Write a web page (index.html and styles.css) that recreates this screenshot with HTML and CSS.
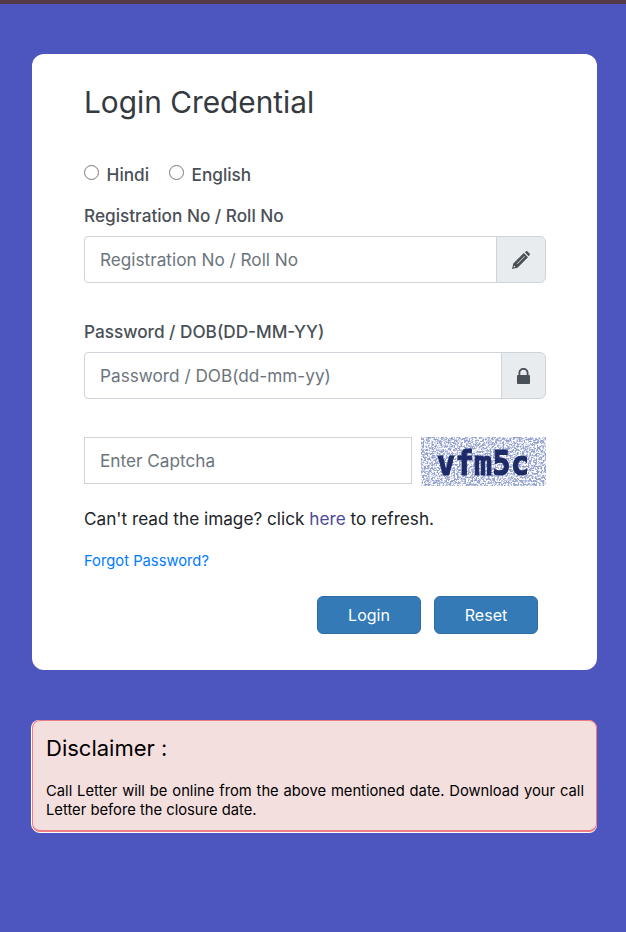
FILE: index.html
```html
<!DOCTYPE html>
<html>
<head>
  <meta charset="UTF-8">
  <title>Login Credential</title>
  <link rel="stylesheet" href="styles.css">
</head>
<body>
  <div class="top-bar"></div>
  <div class="card">
    <h3 class="title">Login Credential</h3>
    <div class="lang-row">
      <label class="lang"><input type="radio" name="lang"> Hindi</label>
      <label class="lang"><input type="radio" name="lang"> English</label>
    </div>

    <label class="field-label">Registration No / Roll No</label>
    <div class="input-group">
      <input class="text-input" type="text" placeholder="Registration No / Roll No">
      <span class="addon">
        <svg class="pencil" width="18" height="18" viewBox="0 0 18 18">
          <path fill="#495057" d="M12.800 1.300 14 .4c.5-.4 1.100-.4 1.500 0l2.100 2.100c.4.4.4 1 0 1.500l-.9 1.200-3.900-3.900z"/>
          <path fill="#495057" d="M11.800 2 16 6.200 5.500 16.700 0 18l1.300-5.500L11.800 2zM12.500 5 5 12.500l.4.4L12.900 5.400l-.4-.4zM2 14.600l-.5 1.900 1.900-.5L2 14.600z"/>
        </svg>
      </span>
    </div>

    <label class="field-label pass-label">Password / DOB(DD-MM-YY)</label>
    <div class="input-group">
      <input class="text-input" type="text" placeholder="Password / DOB(dd-mm-yy)">
      <span class="addon addon-lock">
        <svg width="13" height="16" viewBox="0 0 13 16"><path fill="#495057" d="M1.500 7V4.800C1.500 2.100 3.700 0 6.500 0s5 2.100 5 4.800V7h.4c.6 0 1.100.5 1.100 1.100v6.800c0 .6-.5 1.100-1.100 1.100H1.100C.5 16 0 15.500 0 14.900V8.100C0 7.500.5 7 1.100 7h.4zm1.800 0h6.400V4.800c0-1.700-1.400-3-3.200-3s-3.200 1.300-3.200 3V7z"/></svg>
      </span>
    </div>

    <div class="captcha-row">
      <input class="text-input captcha-input" type="text" placeholder="Enter Captcha">
      <svg class="captcha" width="125" height="49" viewBox="0 0 125 49">
        <defs>
          <filter id="speckle" x="0" y="0" width="100%" height="100%">
            <feTurbulence type="fractalNoise" baseFrequency="0.55" numOctaves="2" seed="11"/>
            <feColorMatrix values="0 0 0 0 0.3  0 0 0 0 0.36  0 0 0 0 0.62  3.500 3.500 0 0 -3"/>
          </filter>
          <filter id="soft">
            <feGaussianBlur stdDeviation="0.45"/>
          </filter>
        </defs>
        <rect width="125" height="49" fill="#fff"/>
        <rect width="125" height="49" filter="url(#speckle)"/>
        <text class="captcha-text" transform="translate(16 38) scale(1 1.15)" textLength="92" filter="url(#soft)">vfm5c</text>
      </svg>
    </div>

    <p class="refresh">Can't read the image? click <a class="here" href="#">here</a> to refresh.</p>
    <a class="forgot" href="#">Forgot Password?</a>

    <div class="actions">
      <button class="btn">Login</button>
      <button class="btn">Reset</button>
    </div>
  </div>

  <div class="disclaimer">
    <h4>Disclaimer :</h4>
    <p>Call Letter will be online from the above mentioned date. Download your call Letter before the closure date.</p>
  </div>
</body>
</html>
```

FILE: styles.css
```css
* {
  box-sizing: border-box;
}
html, body {
  height: 100%;
}
body {
  margin: 0;
  background-color: #4c56be;
  font-family: Inter, "Liberation Sans", sans-serif;
  color: #212529;
  overflow: hidden;
}
.top-bar {
  height: 4px;
  background-color: #553a4a;
}
.card {
  width: 565px;
  height: 616px;
  margin: 50px 0 0 32px;
  padding: 29px 51px 0 52px;
  background-color: #fff;
  border-radius: 12px;
}
.title {
  margin: 0;
  font-size: 29.800px;
  font-weight: 400;
  line-height: 38px;
  color: #343a40;
}
.lang-row {
  display: flex;
  gap: 20px;
  margin-top: 42px;
  height: 24px;
}
.lang {
  font-size: 17.200px;
  font-weight: 500;
  line-height: 24px;
  color: #495057;
  white-space: nowrap;
}
.lang input {
  width: 15px;
  height: 15px;
  margin: 0 3px 0 0;
  position: relative;
  top: -4px;
  vertical-align: middle;
}
.field-label {
  display: block;
  margin: 17px 0 8px;
  font-size: 17.200px;
  font-weight: 500;
  line-height: 24px;
  color: #495057;
}
.pass-label {
  margin-top: 37px;
}
.input-group {
  display: flex;
  height: 47px;
}
.text-input {
  flex: 1;
  min-width: 0;
  height: 47px;
  padding: 0 15px;
  border: 1px solid #ced4da;
  border-radius: 4px 0 0 4px;
  background: #fff;
  font-family: inherit;
  font-size: 17.200px;
  color: #495057;
}
.text-input::placeholder {
  color: #6c757d;
  opacity: 1;
}
.addon {
  display: flex;
  align-items: center;
  justify-content: center;
  width: 50px;
  margin-left: -1px;
  border: 1px solid #ced4da;
  border-radius: 0 6px 6px 0;
  background-color: #e9ecef;
}
.addon-lock {
  width: 45px;
}
.captcha-row {
  display: flex;
  align-items: flex-start;
  gap: 9px;
  margin-top: 38px;
}
.captcha-input {
  flex: none;
  width: 328px;
  border-radius: 0;
}
.captcha {
  display: block;
  flex: none;
}
.captcha-text {
  font-family: "DejaVu Sans Mono", monospace;
  font-size: 30px;
  font-weight: 700;
  fill: #1c2a68;
  stroke: #1c2a68;
  stroke-width: 1px;
}
.refresh {
  margin: 21px 0 0;
  font-size: 17.200px;
  line-height: 24px;
}
.here {
  color: #4c4a9e;
  text-decoration: none;
}
.forgot {
  display: block;
  margin-top: 20px;
  font-size: 14.750px;
  line-height: 20px;
  color: #007bff;
  text-decoration: none;
}
.actions {
  display: flex;
  justify-content: flex-end;
  gap: 13px;
  margin: 25px 8px 0 0;
}
.btn {
  width: 104px;
  height: 38px;
  padding: 0;
  border: 1px solid #2e6da4;
  border-radius: 6px;
  background-color: #337ab7;
  font-family: inherit;
  font-size: 16px;
  color: #fff;
}
.disclaimer {
  width: 565px;
  height: 112px;
  margin: 50px 0 0 32px;
  padding: 13px 12px 0 13px;
  background-color: #f4dfdf;
  border: 1px solid #ee7c85;
  border-bottom: 2px solid #ee7c85;
  border-radius: 8px;
  box-shadow: 0 1px 0 #fff, -1px 0 0 #fff;
  color: #000;
}
.disclaimer h4 {
  margin: 0;
  font-size: 22px;
  font-weight: 400;
  line-height: 28px;
}
.disclaimer p {
  margin: 20px 0 0;
  font-size: 14.750px;
  line-height: 19px;
  text-align: justify;
}
```
